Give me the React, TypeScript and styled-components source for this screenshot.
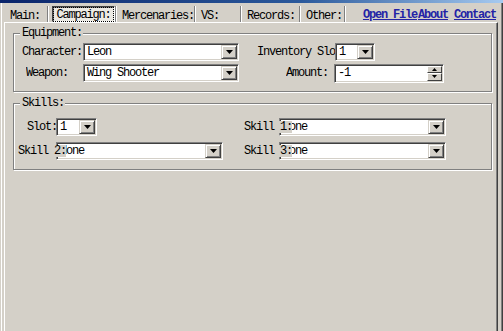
import styled, { createGlobalStyle } from "styled-components";

const GlobalStyle = createGlobalStyle`
  html, body {
    margin: 0;
    padding: 0;
    background: #d4d0c8;
    overflow: hidden;
  }
  #root {
    width: 503px;
    height: 331px;
  }
`;

const TABS = [
  { label: "Main:", width: 43 },
  { label: "Campaign:", width: 67, active: true },
  { label: "Mercenaries:", width: 78 },
  { label: "VS:", width: 45 },
  { label: "Records:", width: 58 },
  { label: "Other:", width: 44 },
];

function Arrow() {
  return (
    <svg width="7" height="4" viewBox="0 0 7 4">
      <path d="M0 0h7L3.5 4z" fill="#000" />
    </svg>
  );
}

function SmallArrow({ up }: { up?: boolean }) {
  return (
    <svg width="5" height="3" viewBox="0 0 5 3">
      <path d={up ? "M0 3h5L2.5 0z" : "M0 0h5L2.5 3z"} fill="#000" />
    </svg>
  );
}

function Combo({ width, value, overlap }: { width: number; value: string; overlap?: number }) {
  return (
    <ComboBox $w={width} $overlap={overlap ?? 0}>
      <ComboText>{value}</ComboText>
      <DropButton>
        <Arrow />
      </DropButton>
    </ComboBox>
  );
}

export default function App() {
  return (
    <>
      <GlobalStyle />
      <Window>
        <TitleStrip />
        <Frame>
          <TabRow>
            {TABS.map((t) => (
              <TabSlot key={t.label} $w={t.width}>
                {t.active ? (
                  <PressedTab>
                    <Focus>{t.label}</Focus>
                  </PressedTab>
                ) : (
                  <TabText>{t.label}</TabText>
                )}
              </TabSlot>
            ))}
            <Links>
              <Link>Open File</Link>
              <Link>About</Link>
              <Link $gap={6}>Contact</Link>
            </Links>
          </TabRow>

          <Panel>
            <GroupBox $top={10} $pad={9} $gap={3}>
              <GroupTitle>Equipment:</GroupTitle>
              <Row $pad={8}>
                <Label $w={61}>Character:</Label>
                <Combo width={156} value="Leon" />
                <Label $w={78} $indent={18}>Inventory Slo</Label>
                <Combo width={40} value="1" />
              </Row>
              <Row $pad={8}>
                <Label $w={57} $indent={4}>Weapon:</Label>
                <Combo width={156} value="Wing Shooter" />
                <Label $w={48} $indent={47}>Amount:</Label>
                <SpinBox>
                  <ComboText>-1</ComboText>
                  <Spinner>
                    <SpinButton>
                      <SmallArrow up />
                    </SpinButton>
                    <SpinButton>
                      <SmallArrow />
                    </SpinButton>
                  </Spinner>
                </SpinBox>
              </Row>
            </GroupBox>

            <GroupBox $top={11} $pad={14} $gap={6}>
              <GroupTitle>Skills:</GroupTitle>
              <Row $pad={4}>
                <Label $w={29} $indent={9}>Slot:</Label>
                <Combo width={41} value="1" />
                <Label $w={48} $indent={147} $over>Skill 1:</Label>
                <Combo width={167} value="None" overlap={13} />
              </Row>
              <Row $pad={4}>
                <Label $w={48} $over>Skill 2:</Label>
                <Combo width={167} value="None" overlap={10} />
                <Label $w={48} $indent={21} $over>Skill 3:</Label>
                <Combo width={167} value="None" overlap={13} />
              </Row>
            </GroupBox>
          </Panel>
        </Frame>
      </Window>
    </>
  );
}

const Window = styled.div`
  width: 503px;
  height: 331px;
  display: flex;
  flex-direction: column;
  overflow: hidden;
  background: #d4d0c8;
  color: #000;
  font-family: "Liberation Mono", "Courier New", monospace;
  font-size: 12px;
  letter-spacing: -1.2px;
  line-height: 12px;
`;

const TitleStrip = styled.div`
  height: 3px;
  flex-shrink: 0;
  background: linear-gradient(90deg, #0a246a 0%, #2c5a9c 60%, #a6caf0 100%);
`;

const Frame = styled.div`
  flex: 1;
  display: flex;
  flex-direction: column;
  min-height: 0;
  border-left: 1px solid #d4d0c8;
  border-right: 1px solid #404040;
  padding: 0 4px 0 2px;
  box-shadow: inset 1px 0 0 #fff, inset -1px 0 0 #808080;
`;

const TabRow = styled.div`
  height: 19px;
  flex-shrink: 0;
  display: flex;
  align-items: stretch;
  padding: 3px 0 0 2px;
  box-sizing: border-box;
`;

const TabSlot = styled.div<{ $w: number }>`
  width: ${(p) => p.$w}px;
  flex-shrink: 0;
  display: flex;
  align-items: center;
  box-sizing: border-box;
  border-right: 1px solid #808080;
  box-shadow: 1px 0 0 #fff;
  margin-right: 1px;
`;

const TabText = styled.span`
  padding: 4px 0 0 5px;
  white-space: nowrap;
`;

const PressedTab = styled.div`
  margin-left: 3px;
  width: 63px;
  height: 16px;
  box-sizing: border-box;
  display: flex;
  align-items: center;
  justify-content: center;
  background: #eceae4;
  border: 1px solid;
  border-color: #404040 #fff #fff #404040;
  box-shadow: inset 1px 1px 0 #808080;
`;

const Focus = styled.span`
  padding: 1px 2px 0;
  outline: 1px dotted #000;
  outline-offset: 0;
  white-space: nowrap;
`;

const Links = styled.div`
  margin-left: auto;
  display: flex;
  align-items: center;
  padding: 2px 2px 0 0;
`;

const Link = styled.span<{ $gap?: number }>`
  margin-left: ${(p) => p.$gap ?? 1}px;
  color: #2323a6;
  text-decoration: underline;
  font-weight: bold;
  white-space: nowrap;
`;

const Panel = styled.div`
  flex: 1;
  display: flex;
  flex-direction: column;
  margin-left: 1px;
  border-top: 1px solid #fff;
  border-left: 1px solid #fff;
  border-right: 1px solid #404040;
  box-shadow: inset -1px 0 0 #808080;
`;

const GroupBox = styled.div<{ $top: number; $pad: number; $gap: number }>`
  position: relative;
  margin: ${(p) => p.$top}px 0 0 8px;
  width: 479px;
  box-sizing: border-box;
  padding: ${(p) => p.$pad}px 0 9px;
  display: flex;
  flex-direction: column;
  gap: ${(p) => p.$gap}px;
  border: 1px solid #808080;
  box-shadow: inset 1px 1px 0 #fff, 1px 1px 0 #fff;
`;

const GroupTitle = styled.span`
  position: absolute;
  top: -7px;
  left: 6px;
  padding: 0 1px 0 2px;
  background: #d4d0c8;
  white-space: nowrap;
`;

const Row = styled.div<{ $pad: number }>`
  display: flex;
  align-items: center;
  height: 18px;
  padding-left: ${(p) => p.$pad}px;
`;

const Label = styled.span<{ $w: number; $indent?: number; $over?: boolean }>`
  width: ${(p) => p.$w}px;
  margin-left: ${(p) => p.$indent ?? 0}px;
  flex-shrink: 0;
  overflow: hidden;
  white-space: nowrap;
  height: 12px;
  background: #d4d0c8;
  position: relative;
  z-index: ${(p) => (p.$over ? 1 : 0)};
`;

const ComboBox = styled.div<{ $w: number; $overlap: number }>`
  width: ${(p) => p.$w}px;
  margin-left: -${(p) => p.$overlap}px;
  height: 18px;
  flex-shrink: 0;
  box-sizing: border-box;
  display: flex;
  align-items: center;
  background: #fff;
  border: 1px solid;
  border-color: #808080 #fff #fff #808080;
  box-shadow: inset 1px 1px 0 #404040, inset -1px -1px 0 #d4d0c8;
`;

const ComboText = styled.span`
  flex: 1;
  min-width: 0;
  padding-left: 3px;
  overflow: hidden;
  white-space: nowrap;
`;

const DropButton = styled.span`
  width: 16px;
  height: 14px;
  margin-right: 1px;
  box-sizing: border-box;
  flex-shrink: 0;
  display: flex;
  align-items: center;
  justify-content: center;
  background: #d4d0c8;
  border: 1px solid;
  border-color: #d4d0c8 #404040 #404040 #d4d0c8;
  box-shadow: inset 1px 1px 0 #fff, inset -1px -1px 0 #808080;
`;

const SpinBox = styled.div`
  width: 110px;
  height: 19px;
  flex-shrink: 0;
  box-sizing: border-box;
  display: flex;
  align-items: center;
  background: #fff;
  border: 1px solid;
  border-color: #808080 #fff #fff #808080;
  box-shadow: inset 1px 1px 0 #404040, inset -1px -1px 0 #d4d0c8;
`;

const Spinner = styled.div`
  width: 15px;
  height: 15px;
  margin-right: 1px;
  display: flex;
  flex-direction: column;
`;

const SpinButton = styled.span`
  flex: 1;
  display: flex;
  align-items: center;
  justify-content: center;
  box-sizing: border-box;
  background: #d4d0c8;
  border: 1px solid;
  border-color: #fff #404040 #404040 #fff;
`;
